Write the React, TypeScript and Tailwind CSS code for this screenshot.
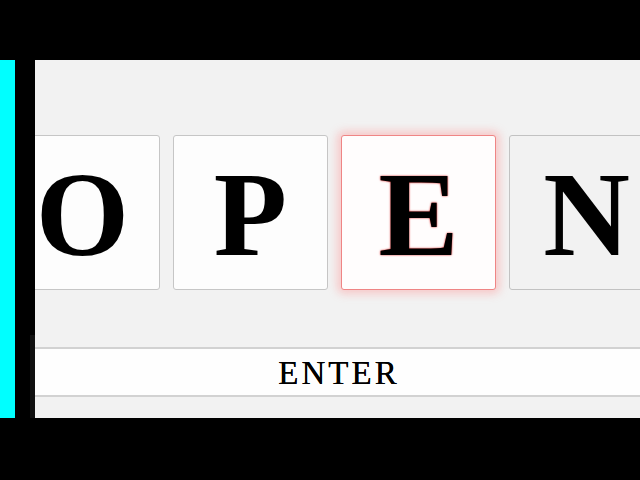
import React from 'react';

const letters = [
  { ch: 'O', state: 'done' },
  { ch: 'P', state: 'done' },
  { ch: 'E', state: 'active' },
  { ch: 'N', state: 'idle' },
];

function Tile({ ch, state }: { ch: string; state: string }) {
  const box =
    state === 'active'
      ? 'bg-[#fffdfd] border-[#ef8585] shadow-[0_0_9px_4px_rgba(255,140,140,0.4)]'
      : state === 'done'
      ? 'bg-[#fdfdfd] border-[#c6c6c6]'
      : 'bg-[#f2f2f2] border-[#c2c2c2]';
  return (
    <div className={`w-[155px] h-[155px] shrink-0 rounded-[3px] border flex items-center justify-center ${box}`}>
      <span
        className={`font-['Liberation_Serif',serif] font-bold text-[120px] leading-none text-black pt-[4px] ${
          state === 'active' ? '[text-shadow:0_0_2px_#d00000]' : ''
        }`}
      >
        {ch}
      </span>
    </div>
  );
}

export default function App() {
  return (
    <div className="w-[640px] h-[480px] bg-black flex flex-col">
      <div className="h-[60px] shrink-0" />
      <div className="h-[358px] flex">
        <div className="w-[15px] bg-[#00ffff]" />
        <div className="w-[20px] bg-black flex flex-col">
          <div className="flex-1" />
          <div className="h-[83px] ml-[15px] bg-[#101010]" />
        </div>
        <div className="flex-1 bg-[#f2f2f2] overflow-hidden flex flex-col">
          <div className="h-[75px] shrink-0" />
          <div className="flex gap-[13px] ml-[-30px]">
            {letters.map((l) => (
              <Tile key={l.ch} ch={l.ch} state={l.state} />
            ))}
          </div>
          <div className="h-[57px] shrink-0" />
          <div className="h-[50px] shrink-0 bg-[#fefefe] border-y-2 border-[#d2d2d2] flex items-center justify-center">
            <span className="font-['Liberation_Serif',serif] text-[33px] tracking-[3px] leading-none text-black pl-[3px] pt-[3px] [text-shadow:0_0_0.6px_#000]">
              ENTER
            </span>
          </div>
          <div className="flex-1" />
        </div>
      </div>
      <div className="flex-1" />
    </div>
  );
}
